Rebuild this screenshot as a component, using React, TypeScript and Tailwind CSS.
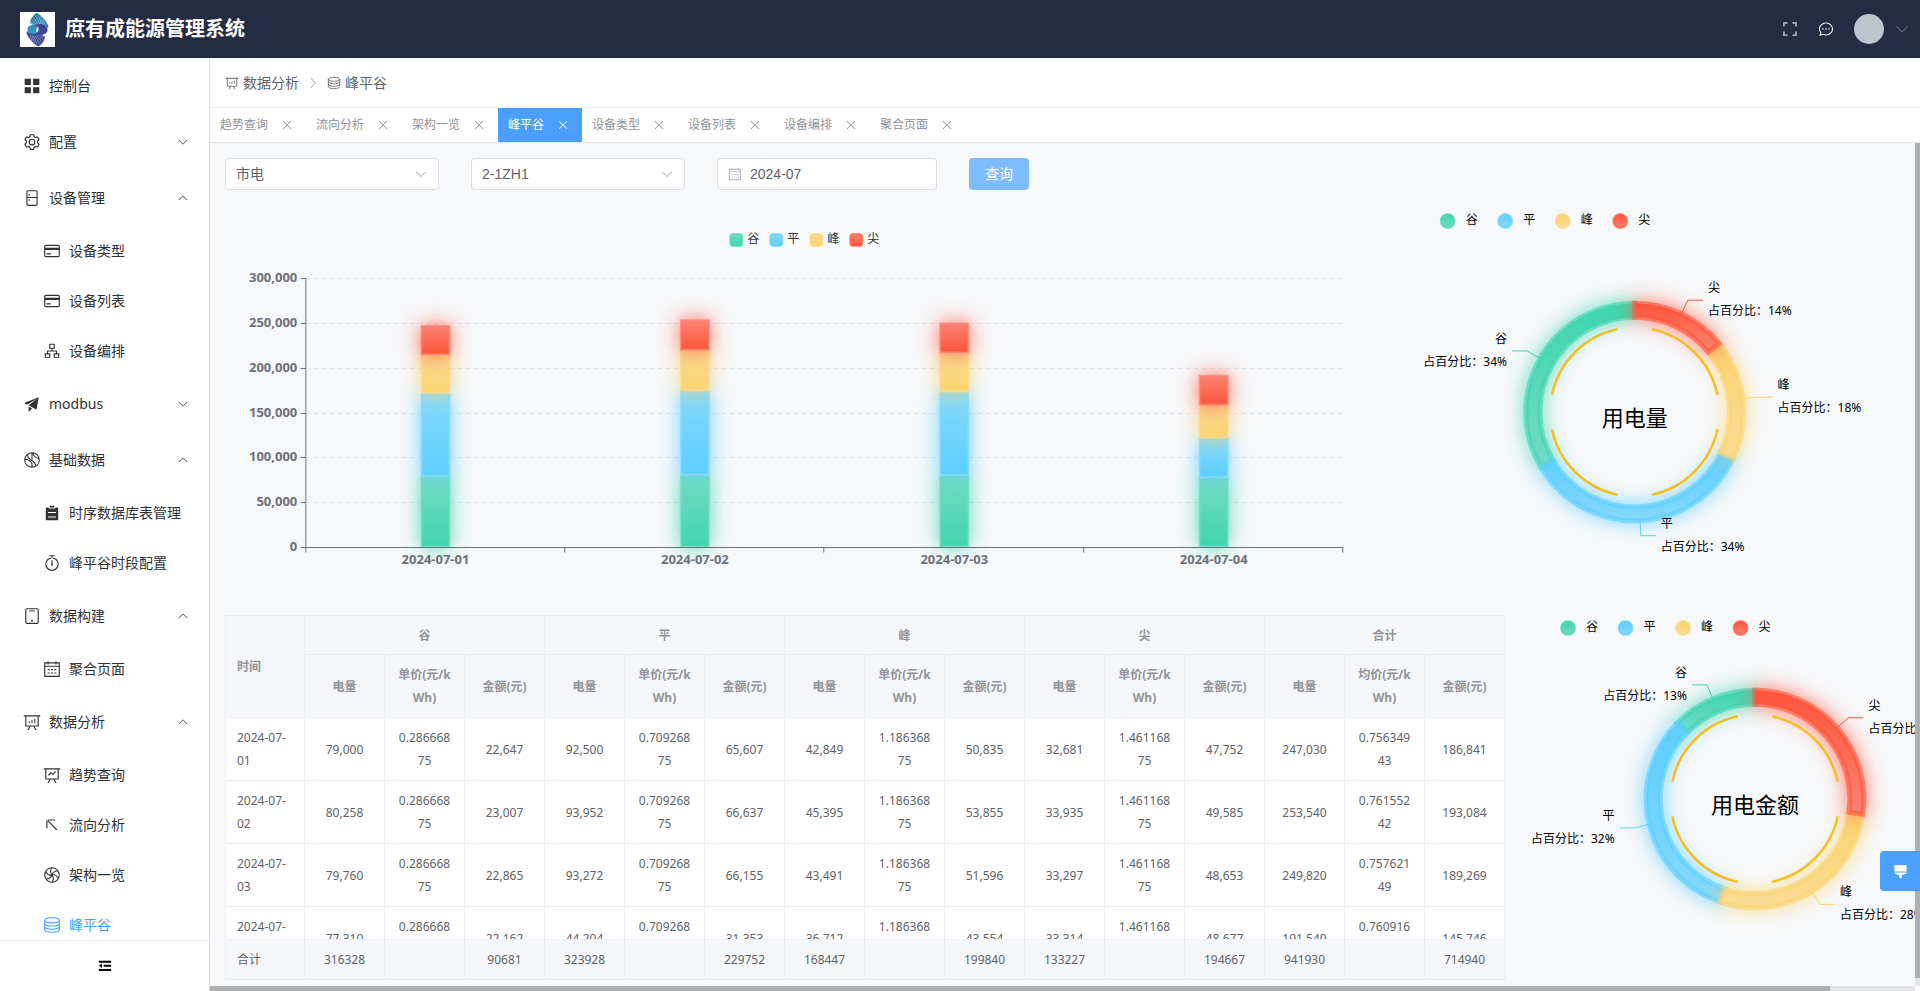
import React, { useState } from 'react';

const ICONS: Record<string, string> = {
  menu: 'M96 96h352v352H96zM576 96h352v352H576zM96 576h352v352H96zM576 576h352v352H576z',
  setting:
    'M600.704 64a32 32 0 0 1 30.464 22.208l35.2 109.376c14.784 7.232 28.928 15.36 42.432 24.512l112.384-24.192a32 32 0 0 1 34.432 15.36L944.32 364.8a32 32 0 0 1-4.032 37.504l-77.12 85.12a357.12 357.12 0 0 1 0 49.024l77.12 85.248a32 32 0 0 1 4.032 37.504l-88.704 153.6a32 32 0 0 1-34.432 15.296L708.8 803.904c-13.44 9.088-27.648 17.28-42.368 24.512l-35.264 109.376A32 32 0 0 1 600.704 960H423.296a32 32 0 0 1-30.464-22.208L357.696 828.48a351.616 351.616 0 0 1-42.56-24.64l-112.32 24.256a32 32 0 0 1-34.432-15.36L79.68 659.2a32 32 0 0 1 4.032-37.504l77.12-85.248a357.12 357.12 0 0 1 0-48.896l-77.12-85.248A32 32 0 0 1 79.68 364.8l88.704-153.6a32 32 0 0 1 34.432-15.296l112.32 24.256c13.568-9.152 27.776-17.408 42.56-24.64l35.2-109.312A32 32 0 0 1 423.232 64H600.64zm-23.424 64H446.72l-36.352 113.088-24.512 11.968a294.113 294.113 0 0 0-34.816 20.096l-22.656 15.36-116.224-25.088-65.28 113.152 79.68 88.192-1.92 27.136a293.12 293.12 0 0 0 0 40.192l1.92 27.136-79.808 88.192 65.344 113.152 116.224-25.024 22.656 15.296a294.113 294.113 0 0 0 34.816 20.096l24.512 11.968L446.72 896h130.688l36.48-113.152 24.448-11.904a288.282 288.282 0 0 0 34.752-20.096l22.592-15.296 116.288 25.024 65.28-113.152-79.744-88.192 1.92-27.136a293.12 293.12 0 0 0 0-40.256l-1.92-27.136 79.808-88.128-65.344-113.152-116.288 24.96-22.592-15.232a287.616 287.616 0 0 0-34.752-20.096l-24.448-11.904L577.344 128zM512 320a192 192 0 1 1 0 384 192 192 0 0 1 0-384m0 64a128 128 0 1 0 0 256 128 128 0 0 0 0-256',
  fridge:
    'M256 448h512V160a32 32 0 0 0-32-32H288a32 32 0 0 0-32 32zm0 64v352a32 32 0 0 0 32 32h448a32 32 0 0 0 32-32V512zm32-448h448a96 96 0 0 1 96 96v704a96 96 0 0 1-96 96H288a96 96 0 0 1-96-96V160a96 96 0 0 1 96-96m32 224h64v96h-64zm0 288h64v96h-64z',
  card: 'M160 160h704a96 96 0 0 1 96 96v512a96 96 0 0 1-96 96H160a96 96 0 0 1-96-96V256a96 96 0 0 1 96-96m0 64a32 32 0 0 0-32 32v64h768v-64a32 32 0 0 0-32-32zM128 448v320a32 32 0 0 0 32 32h704a32 32 0 0 0 32-32V448zm64 192h256v64H192z',
  cluster:
    'M352 96h320v288H544v96h256v160h128v256H608V640h128v-96H288v96h128v256H96V640h128V480h256v-96H352zm64 64v160h192V160zM160 704v128h192V704zm512 0v128h192V704z',
  promotion: 'm64 448 832-320-128 704-446.08-243.328L832 192 242.816 545.472zm256 512V657.024L512 768z',
  list: 'M704 192h160v736H160V192h160v64h384zM288 512h448v-64H288zm0 256h448v-64H288zm96-576V96h256v96z',
  timer:
    'M512 896a320 320 0 1 0 0-640 320 320 0 0 0 0 640m0 64a384 384 0 1 1 0-768 384 384 0 0 1 0 768M480 352h64v224a56 56 0 1 1-64 0zM544 128v128h-64V128h-96a32 32 0 0 1 0-64h256a32 32 0 1 1 0 64z',
  phone:
    'M224 64h576a96 96 0 0 1 96 96v704a96 96 0 0 1-96 96H224a96 96 0 0 1-96-96V160a96 96 0 0 1 96-96m0 64a32 32 0 0 0-32 32v704a32 32 0 0 0 32 32h576a32 32 0 0 0 32-32V160a32 32 0 0 0-32-32zm128 64h320v64H352zm160 640a56 56 0 1 1 0-112 56 56 0 0 1 0 112',
  calendar:
    'M128 384v512h768V192H768v32a32 32 0 1 1-64 0v-32H320v32a32 32 0 0 1-64 0v-32H128v128h768v64zm192-256h384V96a32 32 0 1 1 64 0v32h160a32 32 0 0 1 32 32v768a32 32 0 0 1-32 32H96a32 32 0 0 1-32-32V160a32 32 0 0 1 32-32h160V96a32 32 0 0 1 64 0zm-32 384h64a32 32 0 0 1 0 64h-64a32 32 0 0 1 0-64m0 192h64a32 32 0 1 1 0 64h-64a32 32 0 1 1 0-64m192-192h64a32 32 0 0 1 0 64h-64a32 32 0 0 1 0-64m0 192h64a32 32 0 1 1 0 64h-64a32 32 0 1 1 0-64m192-192h64a32 32 0 1 1 0 64h-64a32 32 0 1 1 0-64m0 192h64a32 32 0 1 1 0 64h-64a32 32 0 1 1 0-64',
  analysis:
    'm665.216 768 110.848 192h-73.856L591.36 768H433.024L322.176 960H248.32l110.848-192H160a32 32 0 0 1-32-32V192H64a32 32 0 0 1 0-64h896a32 32 0 1 1 0 64h-64v544a32 32 0 0 1-32 32zM832 192H192v512h640zM352 448a32 32 0 0 1 32 32v64a32 32 0 0 1-64 0v-64a32 32 0 0 1 32-32m160-64a32 32 0 0 1 32 32v128a32 32 0 0 1-64 0V416a32 32 0 0 1 32-32m160-64a32 32 0 0 1 32 32v192a32 32 0 1 1-64 0V352a32 32 0 0 1 32-32',
  trend:
    'M359.168 768H160a32 32 0 0 1-32-32V192H64a32 32 0 0 1 0-64h896a32 32 0 1 1 0 64h-64v544a32 32 0 0 1-32 32H665.216l110.848 192h-73.856L591.36 768H433.024L322.176 960H248.32zM832 192H192v512h640zM342.656 534.656a32 32 0 1 1-45.312-45.312L444.992 341.76l125.44 94.08L679.04 300.032a32 32 0 1 1 49.92 39.936L581.632 524.224 451.008 426.24 342.656 534.592z',
  topLeft:
    'M256 256h416a32 32 0 1 0 0-64H224a32 32 0 0 0-32 32v448a32 32 0 0 0 64 0zM246.656 201.344a32 32 0 0 0-45.312 45.312l544 544a32 32 0 0 0 45.312-45.312z',
  arrow:
    'M831.872 340.864 512 652.672 192.128 340.864a30.592 30.592 0 0 0-42.752 0 29.12 29.12 0 0 0 0 41.6L489.664 714.24a32 32 0 0 0 44.672 0l340.288-331.712a29.12 29.12 0 0 0 0-41.728 30.592 30.592 0 0 0-42.752 0z',
  close:
    'M764.288 214.592 512 466.88 259.712 214.592a31.936 31.936 0 0 0-45.12 45.12L466.752 512 214.528 764.224a31.936 31.936 0 1 0 45.12 45.184L512 557.184l252.288 252.288a31.936 31.936 0 0 0 45.12-45.12L557.12 512.064l252.288-252.352a31.936 31.936 0 1 0-45.12-45.184z',
  fullscreen:
    'M64 64h288v120H184v168H64zM672 64h288v288H840V184H672zM64 672h120v168h168v120H64zM840 672h120v288H672V840h168z',
  chat: 'm174.72 855.68 135.296-45.12 23.68 11.84C388.096 849.536 448.576 864 512 864c211.84 0 384-166.784 384-352S723.84 160 512 160 128 326.784 128 512c0 69.12 24.96 139.264 70.848 199.232l22.08 28.8-46.272 115.584zm-45.248 82.56A32 32 0 0 1 89.6 896l58.368-145.92C94.72 680.32 64 596.864 64 512 64 299.904 256 96 512 96s448 203.904 448 416-192 416-448 416a461.056 461.056 0 0 1-206.912-48.384zM512 563.2a51.2 51.2 0 1 1 0-102.4 51.2 51.2 0 0 1 0 102.4m192 0a51.2 51.2 0 1 1 0-102.4 51.2 51.2 0 0 1 0 102.4m-384 0a51.2 51.2 0 1 1 0-102.4 51.2 51.2 0 0 1 0 102.4',
  fold: 'M64 128h896v144H64zM416 420h544v144H416zM64 740h896v144H64zM64 492l220-160v320z',
  brush: 'M96 64h832v448H96zM96 576h832v64L704 736H608v192l-96 64-96-64V736h-96L96 640z',
};

const STROKED: Record<string, string> = {
  ball: 'M512 96a416 416 0 1 1 0 832 416 416 0 0 1 0-832M512 96V540M512 700V928M236 200C290 430 480 560 512 540C640 600 700 720 740 860M100 470C260 470 420 570 512 720M560 100C580 260 720 400 920 430',
  wheel:
    'M512 96a416 416 0 1 1 0 832 416 416 0 0 1 0-832M512 512C420 400 420 240 500 100M512 512C560 370 690 270 850 280M512 512C650 480 800 560 860 710M512 512C600 620 610 780 530 924M512 512C460 650 330 750 170 740M512 512C370 540 220 460 160 310',
  coin: 'M96 240C96 160 280 96 512 96s416 64 416 144-184 150-416 150S96 320 96 240v530c0 90 184 158 416 158s416-68 416-158V240M96 420c0 84 184 150 416 150s416-66 416-150M96 600c0 84 184 150 416 150s416-66 416-150',
};

const Icon = ({ name, className }: { name: string; className?: string }) => (
  <svg viewBox="0 0 1024 1024" className={className} fill="currentColor" fillRule="evenodd" aria-hidden="true">
    {STROKED[name] ? (
      <path d={STROKED[name]} fill="none" stroke="currentColor" strokeWidth="60" />
    ) : (
      <path d={ICONS[name]} />
    )}
  </svg>
);

interface MenuItem {
  label: string;
  icon: string;
  open?: boolean;
  children?: { label: string; icon: string; active?: boolean }[];
}

const menu: MenuItem[] = [
  { label: '控制台', icon: 'menu' },
  { label: '配置', icon: 'setting', open: false },
  {
    label: '设备管理',
    icon: 'fridge',
    open: true,
    children: [
      { label: '设备类型', icon: 'card' },
      { label: '设备列表', icon: 'card' },
      { label: '设备编排', icon: 'cluster' },
    ],
  },
  { label: 'modbus', icon: 'promotion', open: false },
  {
    label: '基础数据',
    icon: 'ball',
    open: true,
    children: [
      { label: '时序数据库表管理', icon: 'list' },
      { label: '峰平谷时段配置', icon: 'timer' },
    ],
  },
  { label: '数据构建', icon: 'phone', open: true, children: [{ label: '聚合页面', icon: 'calendar' }] },
  {
    label: '数据分析',
    icon: 'analysis',
    open: true,
    children: [
      { label: '趋势查询', icon: 'trend' },
      { label: '流向分析', icon: 'topLeft' },
      { label: '架构一览', icon: 'wheel' },
      { label: '峰平谷', icon: 'coin', active: true },
    ],
  },
];

const tabs = ['趋势查询', '流向分析', '架构一览', '峰平谷', '设备类型', '设备列表', '设备编排', '聚合页面'];

const series = [
  { name: '谷', strong: '#3fd6ae', light: '#74dbc0', key: 'gu' },
  { name: '平', strong: '#5ccfff', light: '#86d8fb', key: 'ping' },
  { name: '峰', strong: '#fbd470', light: '#f8dc94', key: 'feng' },
  { name: '尖', strong: '#ff553b', light: '#fa8272', key: 'jian' },
];

const days = [
  { date: '2024-07-01', values: [79000, 92500, 42849, 32681] },
  { date: '2024-07-02', values: [80258, 93952, 45395, 33935] },
  { date: '2024-07-03', values: [79760, 93272, 43491, 33297] },
  { date: '2024-07-04', values: [77310, 44204, 36712, 33314] },
];

const rows = [
  ['2024-07-01', '79,000', '0.28666875', '22,647', '92,500', '0.70926875', '65,607', '42,849', '1.18636875', '50,835', '32,681', '1.46116875', '47,752', '247,030', '0.75634943', '186,841'],
  ['2024-07-02', '80,258', '0.28666875', '23,007', '93,952', '0.70926875', '66,637', '45,395', '1.18636875', '53,855', '33,935', '1.46116875', '49,585', '253,540', '0.76155242', '193,084'],
  ['2024-07-03', '79,760', '0.28666875', '22,865', '93,272', '0.70926875', '66,155', '43,491', '1.18636875', '51,596', '33,297', '1.46116875', '48,653', '249,820', '0.75762149', '189,269'],
  ['2024-07-04', '77,310', '0.28666875', '22,162', '44,204', '0.70926875', '31,353', '36,712', '1.18636875', '43,554', '33,314', '1.46116875', '48,677', '191,540', '0.76091687', '145,746'],
];

const totals = ['合计', '316328', '', '90681', '323928', '', '229752', '168447', '', '199840', '133227', '', '194667', '941930', '', '714940'];

const Logo = () => {
  const wing =
    'M16.500 1 L20 3 L23 6 L26 9.500 L28.500 14 L28 16.500 C24 12.500 20 13 17.800 15 C15.200 17.500 16 21.500 20 22.500 C14 25.500 8 22 7.500 18 C7.300 14.500 10 13.500 13 12.500 L10 11 L10.500 8.500 L11.500 6 L13 4 L14.500 2.500 Z';
  const rays = 'M15 3L20 12M13 5L18.500 12.500M11.500 7.500L16.500 12.800M18 3L21.500 12M20.500 4.500L23 12.500M23 7L25 13.500M10.500 10L14.500 12.800';
  return (
    <svg viewBox="0 0 35 35" className="size-[35px] bg-white" aria-hidden="true">
      <defs>
        <linearGradient id="logo-top" x1="0" y1="0" x2="0" y2="1">
          <stop offset="0" stopColor="#1f6c96" />
          <stop offset="1" stopColor="#3aa0cf" />
        </linearGradient>
        <linearGradient id="logo-bottom" x1="0" y1="0" x2="0" y2="1">
          <stop offset="0" stopColor="#3a4b96" />
          <stop offset="1" stopColor="#45408c" />
        </linearGradient>
      </defs>
      <g>
        <path d={wing} fill="url(#logo-top)" />
        <path d={rays} stroke="#fff" strokeOpacity="0.6" strokeWidth="0.6" />
      </g>
      <g transform="rotate(180 17.5 17.8)">
        <path d={wing} fill="url(#logo-bottom)" />
        <path d={rays} stroke="#fff" strokeOpacity="0.5" strokeWidth="0.6" />
      </g>
    </svg>
  );
};

const Header = () => (
  <header className="flex h-[58px] shrink-0 items-center bg-[#242b43] pr-[10px] pl-5 text-white">
    <Logo />
    <h1 className="ml-[10px] text-xl font-bold">庶有成能源管理系统</h1>
    <div className="ml-auto flex items-center">
      <button type="button" aria-label="全屏" className="text-[#9da1ad]">
        <Icon name="fullscreen" className="size-4" />
      </button>
      <button type="button" aria-label="消息" className="ml-5">
        <Icon name="chat" className="size-4" />
      </button>
      <button type="button" aria-label="用户" className="ml-5 flex items-center">
        <span className="size-[30px] rounded-full bg-[#c0c4cc]" />
        <Icon name="arrow" className="ml-[10px] size-4 text-[#6b6e7c]" />
      </button>
    </div>
  </header>
);

const Sidebar = () => (
  <aside className="flex w-[210px] shrink-0 flex-col border-r border-[#dcdfe6] bg-white text-sm text-[#303133]">
    <nav className="min-h-0 flex-1 overflow-hidden">
      {menu.map((item) => (
        <div key={item.label}>
          <a href="#" className="flex h-14 items-center pr-5 pl-[23px]">
            <Icon name={item.icon} className="size-[18px]" />
            <span className="ml-2">{item.label}</span>
            {item.open !== undefined && (
              <Icon name="arrow" className={item.open ? 'ml-auto size-3 rotate-180' : 'ml-auto size-3'} />
            )}
          </a>
          {item.children?.map((child) => (
            <a
              key={child.label}
              href="#"
              className={`flex h-[50px] items-center pl-[43px] ${child.active ? 'text-[#409eff]' : ''}`}
            >
              <Icon name={child.icon} className="size-[18px]" />
              <span className="ml-2">{child.label}</span>
            </a>
          ))}
        </div>
      ))}
    </nav>
    <button type="button" aria-label="收起菜单" className="flex h-[51px] shrink-0 items-center justify-center border-t border-[#e8eaf2] text-black">
      <Icon name="fold" className="size-[14px]" />
    </button>
  </aside>
);

const Breadcrumb = () => (
  <div className="flex h-[50px] shrink-0 items-center border-b border-[#ebedf2] bg-white px-[15px] text-sm text-[#606266]">
    <Icon name="analysis" className="size-[14px]" />
    <a href="#" className="ml-1">数据分析</a>
    <Icon name="arrow" className="mx-[7px] size-[14px] -rotate-90 text-[#a8abb2]" />
    <Icon name="coin" className="size-[14px]" />
    <span className="ml-1">峰平谷</span>
  </div>
);

const Tabs = () => (
  <div className="flex h-[35px] shrink-0 border-b border-[#dfe1e5] bg-white text-xs">
    {tabs.map((tab) => (
      <div
        key={tab}
        className={`flex items-center pr-3 pl-[10px] ${tab === '峰平谷' ? 'bg-[#4b9fff] text-white' : 'text-[#909399]'}`}
      >
        <a href="#">{tab}</a>
        <button type="button" aria-label={`关闭${tab}`} className="ml-3">
          <Icon name="close" className="size-[14px]" />
        </button>
      </div>
    ))}
  </div>
);

const SelectBox = ({ label, value }: { label: string; value: string }) => (
  <div className="relative w-[214px]">
    <select
      aria-label={label}
      className="h-8 w-full appearance-none rounded border border-[#dcdfe6] bg-white px-[10px] font-['Liberation_Sans','Noto_Sans_CJK_SC',sans-serif] text-sm text-[#606266]"
    >
      <option>{value}</option>
    </select>
    <Icon name="arrow" className="pointer-events-none absolute top-[9px] right-[11px] size-[14px] text-[#a8abb2]" />
  </div>
);

const Filters = () => {
  const [month, setMonth] = useState('2024-07');
  return (
    <form className="flex gap-8" onSubmit={(e) => e.preventDefault()}>
      <SelectBox label="能源类型" value="市电" />
      <SelectBox label="设备" value="2-1ZH1" />
      <label className="flex h-8 w-[220px] items-center rounded border border-[#dcdfe6] bg-white px-[10px]">
        <Icon name="calendar" className="size-[14px] shrink-0 text-[#a8abb2]" />
        <input
          aria-label="月份"
          value={month}
          onChange={(e) => setMonth(e.target.value)}
          className="ml-2 w-full min-w-0 font-['Liberation_Sans',sans-serif] text-sm text-[#606266] outline-none"
        />
      </label>
      <button type="submit" className="h-8 w-[60px] rounded bg-[#7fbbff] text-sm text-white">
        查询
      </button>
    </form>
  );
};

const SeriesDefs = ({ id, flip }: { id: string; flip?: boolean }) => (
  <defs>
    {series.map((s) => (
      <React.Fragment key={s.key}>
        <linearGradient id={`${id}-${s.key}`} x1="0" y1="0" x2="0" y2="1">
          <stop offset="0" stopColor={flip ? s.strong : s.light} />
          <stop offset="1" stopColor={flip ? s.light : s.strong} />
        </linearGradient>
        <filter id={`${id}-glow-${s.key}`} filterUnits="userSpaceOnUse" x="-40" y="-40" width="1300" height="600">
          <feDropShadow dx="0" dy="0" stdDeviation="10" floodColor={s.strong} floodOpacity="0.9" />
        </filter>
      </React.Fragment>
    ))}
  </defs>
);

const BarChart = () => {
  const left = 80.5;
  const bottom = 342.5;
  const plotHeight = 269;
  const band = 259.4;
  const y = (v: number) => bottom - (v / 300000) * plotHeight;
  const line = (v: number) => Math.floor(y(v)) + 0.5;
  const ticks = [0, 50000, 100000, 150000, 200000, 250000, 300000];

  return (
    <svg viewBox="0 0 1160 410" className="h-[410px] w-full overflow-visible">
      <SeriesDefs id="bar" />
      {series.map((s, i) => (
        <g key={s.key}>
          <rect x={505 + i * 40} y="29" width="12" height="12" rx="3" fill={`url(#bar-${s.key})`} stroke={s.strong} strokeOpacity="0.6" strokeWidth="2" />
          <text x={522 + i * 40} y="38" className="fill-[#333] text-xs">{s.name}</text>
        </g>
      ))}
      {ticks.map((t) => (
        <g key={t}>
          {t > 0 && <path d={`M${left} ${line(t)}H1118`} stroke="#e0e4f0" strokeDasharray="5 3" />}
          <path d={`M${left - 5} ${line(t)}h5`} stroke="#6e7079" />
          <text x="72" y={line(t) + 3} textAnchor="end" className="fill-[#6e7079] text-[13px] font-bold">
            {t.toLocaleString('en-US')}
          </text>
        </g>
      ))}
      {series.map((s, si) =>
        days.map((d, di) => {
          const base = d.values.slice(0, si).reduce((a, b) => a + b, 0);
          const top = y(base + d.values[si]);
          return (
            <rect
              key={s.key + d.date}
              x={left + band * (di + 0.5) - 14}
              y={top}
              width="28"
              height={y(base) - top - 1}
              fill={`url(#bar-${s.key})`}
              stroke={s.light}
              strokeOpacity="0.7"
              strokeWidth="2"
              filter={`url(#bar-glow-${s.key})`}
            />
          );
        }),
      )}
      <path d={`M${left} 73V${bottom}H1118`} fill="none" stroke="#6e7079" />
      {[0, 1, 2, 3, 4].map((i) => (
        <path key={i} d={`M${Math.round(left + band * i) - 0.5} ${bottom}v5`} stroke="#6e7079" />
      ))}
      {days.map((d, i) => (
        <text key={d.date} x={left + band * (i + 0.5)} y="359" textAnchor="middle" className="fill-[#6e7079] text-[13px] font-bold">
          {d.date}
        </text>
      ))}
    </svg>
  );
};

interface PieProps {
  id: string;
  title: string;
  values: number[];
  cx: number;
  cy: number;
  legendX: number;
  legendY: number;
  viewBox: string;
  className: string;
}

const PieChart = ({ id, title, values, cx, cy, legendX, legendY, viewBox, className }: PieProps) => {
  const outer = 108.8;
  const inner = 94.8;
  const total = values.reduce((a, b) => a + b, 0);
  const point = (r: number, a: number) => [cx + r * Math.sin(a), cy - r * Math.cos(a)];

  // sectors run counter-clockwise from twelve o'clock
  let cursor = 0;
  const sectors = values.map((v, i) => {
    const from = cursor;
    const to = cursor - (v / total) * Math.PI * 2;
    cursor = to;
    const large = from - to > Math.PI ? 1 : 0;
    const d = `M${point(outer, from)}A${outer} ${outer} 0 ${large} 0 ${point(outer, to)}L${point(inner, to)}A${inner} ${inner} 0 ${large} 1 ${point(inner, from)}Z`;
    return { ...series[i], d, mid: (from + to) / 2, percent: Math.round((v / total) * 100) };
  });

  return (
    <svg viewBox={viewBox} className={className}>
      <SeriesDefs id={id} flip />
      {series.map((s, i) => (
        <g key={s.key}>
          <circle cx={legendX + i * 57.5} cy={legendY} r="7" fill={`url(#${id}-${s.key})`} stroke={s.strong} strokeOpacity="0.6" strokeWidth="2" />
          <text x={legendX + 18 + i * 57.5} y={legendY + 3} className="fill-black text-xs">{s.name}</text>
        </g>
      ))}
      {sectors.map((s) => (
        <path key={s.key} d={s.d} fill={`url(#${id}-${s.key})`} stroke={s.strong} strokeOpacity="0.6" strokeWidth="5" filter={`url(#${id}-glow-${s.key})`} />
      ))}
      {[0, 90, 180, 270].map((a) => {
        const start = point(84.5, ((a + 11.8) * Math.PI) / 180);
        const end = point(84.5, ((a + 78.2) * Math.PI) / 180);
        return <path key={a} d={`M${start}A84.5 84.5 0 0 1 ${end}`} fill="none" stroke="#f6be25" strokeWidth="2.5" />;
      })}
      {sectors.map((s) => {
        const [x1, y1] = point(outer, s.mid);
        const [x2, y2] = point(outer + 15, s.mid);
        const dir = x2 > cx ? 1 : -1;
        const anchor = dir > 0 ? 'start' : 'end';
        return (
          <g key={s.key}>
            <path d={`M${x1} ${y1}L${x2} ${y2}h${15 * dir}`} fill="none" stroke={s.strong} />
            <text x={x2 + 20 * dir} y={y2 - 8} textAnchor={anchor} className="fill-black text-xs">{s.name}</text>
            <text x={x2 + 20 * dir} y={y2 + 15} textAnchor={anchor} className="fill-black text-xs">{`占百分比：${s.percent}%`}</text>
          </g>
        );
      })}
      <text x={cx} y={cy + 14} textAnchor="middle" className="fill-black text-[22px]">{title}</text>
    </svg>
  );
};

const columns = Array.from({ length: 16 }, (_, i) => i);

const Columns = () => (
  <colgroup>
    {columns.map((c) => (
      <col key={c} className={c === 0 ? 'w-[79px]' : ''} />
    ))}
  </colgroup>
);

const DataTable = () => (
  <div className="min-w-0 flex-1 border-t border-l border-[#ebeef5] text-xs leading-[23px] text-[#606266]">
    <div className="h-[323px] overflow-hidden">
      <table className="w-full table-fixed border-separate border-spacing-0 bg-white">
        <Columns />
        <thead className="bg-[#f5f7fb] text-[#909399]">
          <tr>
            <th rowSpan={2} className="border-r border-b border-[#ebeef5] px-[11px] text-left">时间</th>
            {['谷', '平', '峰', '尖', '合计'].map((g) => (
              <th key={g} colSpan={3} className="h-[39px] border-r border-b border-[#ebeef5]">{g}</th>
            ))}
          </tr>
          <tr>
            {columns.slice(1).map((c) => (
              <th key={c} className="border-r border-b border-[#ebeef5] px-3 py-2 break-all">
                {c % 3 === 1 ? '电量' : c % 3 === 0 ? '金额(元)' : c === 14 ? '均价(元/kWh)' : '单价(元/kWh)'}
              </th>
            ))}
          </tr>
        </thead>
        <tbody>
          {rows.map((row) => (
            <tr key={row[0]}>
              {row.map((cell, i) => (
                <td
                  key={i}
                  className={`border-r border-b border-[#ebeef5] py-2 ${i === 0 ? 'px-[11px]' : 'px-3 text-center break-all'}`}
                >
                  {cell}
                </td>
              ))}
            </tr>
          ))}
        </tbody>
      </table>
    </div>
    <table className="w-full table-fixed border-separate border-spacing-0 bg-[#f5f7fa]">
      <Columns />
      <tbody>
        <tr>
          {totals.map((cell, i) => (
            <td
              key={i}
              className={`h-[41px] border-t border-r border-b border-[#ebeef5] ${i === 0 ? 'px-[11px]' : 'px-3 text-center'}`}
            >
              {cell}
            </td>
          ))}
        </tr>
      </tbody>
    </table>
  </div>
);

export default function App() {
  return (
    <div className="relative flex h-screen flex-col overflow-hidden font-['Noto_Sans','Noto_Sans_CJK_SC',sans-serif]">
      <Header />
      <div className="flex min-h-0 flex-1">
        <Sidebar />
        <main className="flex min-w-0 flex-1 flex-col">
          <Breadcrumb />
          <Tabs />
          <div className="grid min-h-0 flex-1 grid-cols-[minmax(0,1fr)_5px] grid-rows-[minmax(0,1fr)_5px]">
            <div className="overflow-hidden bg-[#f7f8fa] pt-[15px] pl-[15px]">
              <Filters />
              <div className="mt-[15px] flex pr-8">
                <div className="min-w-0 flex-7">
                  <BarChart />
                </div>
                <div className="min-w-0 flex-3">
                  <PieChart
                    id="power"
                    title="用电量"
                    values={[316328, 323928, 168447, 133227]}
                    cx={248}
                    cy={207}
                    legendX={61}
                    legendY={16}
                    viewBox="0 0 496 410"
                    className="h-[410px] w-full overflow-visible"
                  />
                </div>
              </div>
              <div className="flex">
                <DataTable />
                <div className="w-[410px] shrink-0 overflow-hidden">
                  <PieChart
                    id="cost"
                    title="用电金额"
                    values={[90681, 229752, 199840, 194667]}
                    cx={250}
                    cy={184}
                    legendX={63}
                    legendY={13}
                    viewBox="0 0 500 364"
                    className="h-[364px] w-[500px] max-w-none"
                  />
                </div>
              </div>
            </div>
            <div className="bg-[#e2e4e7]">
              <div className="h-[99%] bg-[#aeafb0]" />
            </div>
            <div className="bg-[#e2e4e7]">
              <div className="h-full w-[95%] bg-[#aeafb0]" />
            </div>
          </div>
        </main>
      </div>
      <button
        type="button"
        aria-label="主题设置"
        className="absolute right-0 bottom-[100px] flex size-10 items-center justify-center rounded-l bg-[#4b9fff] text-white"
      >
        <Icon name="brush" className="size-[15px]" />
      </button>
    </div>
  );
}
